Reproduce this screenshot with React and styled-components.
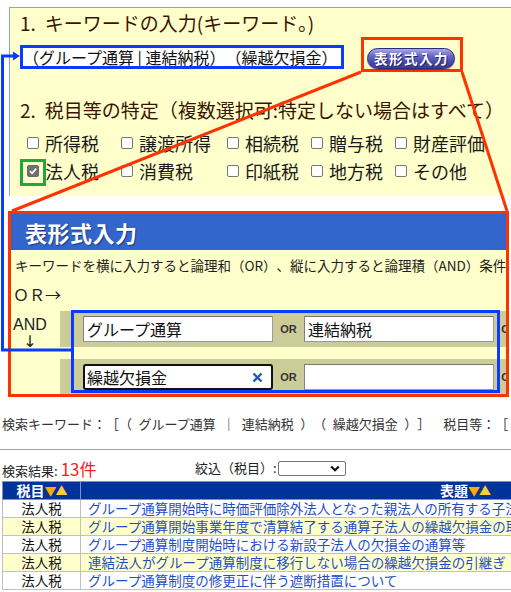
import React from 'react';
import styled, { createGlobalStyle } from 'styled-components';

const GlobalStyle = createGlobalStyle`
  html, body { margin: 0; padding: 0; background: #fff; }
  body {
    font-family: "Noto Sans CJK JP", "Noto Sans", sans-serif;
    color: #222;
    overflow: hidden;
    text-spacing-trim: space-all;
  }
`;

const Page = styled.div`
  position: relative;
  width: 511px;
  height: 592px;
  overflow: hidden;
`;

/* ---------- top panel ---------- */
const TopPanel = styled.section`
  box-sizing: border-box;
  margin: 7px 0 0 9px;
  width: 502px;
  height: 189px;
  background: #ffffcc;
  border-top: 1px solid #86a3dc;
  border-left: 1px solid #86a3dc;
  padding: 3px 0 0 10px;
`;

const Heading = styled.h2`
  margin: ${p => p.$top}px 0 0;
  font-size: 19px;
  font-weight: 400;
  line-height: 24px;
  color: #3a1400;
  white-space: nowrap;
`;

const Num = styled.span`
  margin-right: 9px;
`;

const KeywordRow = styled.div`
  display: flex;
  align-items: flex-start;
  margin-top: 2px;
  height: 35px;
`;

const KeywordBox = styled.div`
  box-sizing: border-box;
  width: 324px;
  height: 24px;
  margin-top: 8px;
  border: 3px solid #0a3cff;
  background: #fff;
  font-size: 16px;
  line-height: 18px;
  color: #111;
  white-space: nowrap;
  overflow: hidden;
`;

const RedFrame = styled.div`
  box-sizing: border-box;
  margin-left: 17px;
  width: 102px;
  height: 35px;
  border: 3px solid #ff3300;
  padding: 5px 0 0 3px;
`;

const PillButton = styled.button`
  box-sizing: border-box;
  width: 88px;
  height: 21px;
  padding: 0 0 0 1px;
  border-radius: 11px;
  border: 1px solid #2b2b7a;
  background: linear-gradient(#a9a9ee 0%, #6a6ac8 35%, #4848a8 70%, #3d3d96 100%);
  color: #fff;
  font-family: "Noto Sans CJK JP", sans-serif;
  font-size: 13.5px;
  font-weight: 700;
  letter-spacing: 1.5px;
  line-height: 19px;
  white-space: nowrap;
  text-shadow: 1px 1px 0 #22226a;
  box-shadow: 0 1px 1px rgba(0,0,0,0.35);
`;

const CheckGrid = styled.div`
  display: grid;
  grid-template-columns: 94px 106px 84px 84px auto;
  grid-auto-rows: 28px;
  margin-top: 7px;
  padding-left: 7px;
`;

const CheckItem = styled.label`
  display: flex;
  align-items: center;
  gap: 6px;
  font-size: 18px;
  line-height: 28px;
  white-space: nowrap;
  color: #1a1a1a;
`;

const Box = styled.span`
  position: relative;
  flex: none;
  box-sizing: border-box;
  width: 12px;
  height: 12px;
  border-radius: 2px;
  border: 1px solid ${p => (p.$checked ? '#6a6a6a' : '#767676')};
  background: ${p => (p.$checked ? '#6f6f6f' : '#fff')};
  display: flex;
  align-items: center;
  justify-content: center;
  ${p => p.$highlight && `
    &::after {
      content: '';
      position: absolute;
      left: -8px;
      top: -7px;
      width: 26px;
      height: 27px;
      box-sizing: border-box;
      border: 3px solid #1fa83c;
    }
  `}
`;

/* ---------- table-input frame ---------- */
const TableInputFrame = styled.section`
  position: relative;
  box-sizing: border-box;
  margin: 15px 0 0 8px;
  width: 501px;
  height: 186px;
  border: 3px solid #ff3300;
  background: #ffffcc;
  overflow: hidden;
`;

const FrameHeader = styled.div`
  height: 36px;
  background: #3366cc;
  color: #fff;
  font-size: 22px;
  font-weight: 700;
  line-height: 36px;
  padding-left: 14px;
  text-shadow: 1px 1px 1px #1b3a80;
  letter-spacing: 0.5px;
`;

const Desc = styled.div`
  margin-top: 5px;
  padding-left: 4px;
  font-size: 13.5px;
  line-height: 20px;
  white-space: nowrap;
  color: #222;
`;

const OrLabel = styled.div`
  margin-top: 9px;
  padding-left: 2px;
  font-size: 16px;
  line-height: 20px;
  color: #222;
`;

const Rows = styled.div`
  margin-top: 7px;
  display: flex;
  flex-direction: column;
  gap: 12px;
`;

const Row = styled.div`
  display: flex;
  height: 36px;
`;

const AxisCell = styled.div`
  box-sizing: border-box;
  flex: none;
  width: 49px;
  padding-left: 2px;
`;

const AndLabel = styled.div`
  display: inline-flex;
  flex-direction: column;
  align-items: center;
  margin-top: -1px;
  font-family: "Liberation Sans", Arial, sans-serif;
  font-size: 16px;
  line-height: 16px;
  color: #222;
`;

const DownArrow = styled.span`
  font-family: "DejaVu Sans", sans-serif;
  font-size: 16px;
  line-height: 18px;
  color: #222;
`;

const KhakiBar = styled.div`
  flex: 1;
  display: flex;
  align-items: center;
  padding-left: 23px;
  background: #cccc99;
`;

const Field = styled.div`
  position: relative;
  box-sizing: border-box;
  flex: none;
  width: 190px;
  height: 26px;
  background: #fff;
  border: ${p => (p.$focused ? '2px solid #111' : '1px solid #9a9a9a')};
  border-top-color: ${p => (p.$focused ? '#111' : '#777')};
  border-left-color: ${p => (p.$focused ? '#111' : '#808080')};
  border-radius: ${p => (p.$focused ? '3px' : '1px')};
  padding-left: ${p => (p.$focused ? '2px' : '3px')};
  font-size: 16px;
  line-height: ${p => (p.$focused ? '22px' : '24px')};
  color: #111;
  white-space: nowrap;
`;

const Composing = styled.span`
  border-bottom: 1px dotted #111;
`;

const ClearIcon = styled.svg`
  position: absolute;
  right: 8px;
  top: 6px;
`;

const OrSep = styled.span`
  flex: none;
  width: 31px;
  text-align: center;
  font-family: "Liberation Sans", Arial, sans-serif;
  font-size: 11px;
  font-weight: 700;
  color: #333;
`;

const BlueFrame = styled.div`
  position: absolute;
  left: 60px;
  top: 96px;
  width: 429px;
  height: 83px;
  box-sizing: border-box;
  border: 3px solid #0a3cff;
  pointer-events: none;
`;

/* ---------- result area ---------- */
const SearchKeyword = styled.div`
  margin-top: 17px;
  padding-left: 2px;
  font-size: 13px;
  line-height: 20px;
  color: #333;
  white-space: nowrap;
`;

const Rule = styled.div`
  margin-top: 15px;
  height: 1px;
  background: #a0a0a0;
`;

const ResultBar = styled.div`
  display: flex;
  align-items: flex-end;
  height: 31px;
  padding-left: 2px;
`;

const ResultCount = styled.div`
  flex: none;
  width: 193px;
  font-size: 13px;
  line-height: 20px;
  color: #222;
  white-space: nowrap;
`;

const Count = styled.span`
  margin-left: 3px;
  font-size: 17px;
  color: #ff1a1a;
`;

const Filter = styled.div`
  display: flex;
  align-items: center;
  gap: 1px;
  margin-bottom: 4px;
  font-size: 13px;
  line-height: 18px;
  color: #222;
  white-space: nowrap;
`;

const SelectBox = styled.span`
  box-sizing: border-box;
  width: 68px;
  height: 15px;
  border: 1px solid #767676;
  border-radius: 2px;
  background: #fff;
  display: flex;
  align-items: center;
  justify-content: flex-end;
  padding-right: 5px;
`;

const ResultTable = styled.table`
  margin-left: 2px;
  width: 848px;
  border-collapse: collapse;
  table-layout: fixed;
`;

const Th = styled.th`
  height: 17px;
  padding: 0;
  background: #003399;
  color: #fff;
  font-size: 14px;
  font-weight: 700;
  line-height: 17px;
  border: 1px solid #8090c0;
  white-space: nowrap;
`;

const Sort = styled.span`
  font-size: 12px;
  letter-spacing: -1px;
  color: ${p => p.$c};
`;

const Tr = styled.tr`
  background: ${p => (p.$alt ? '#ffffcc' : '#fff')};
`;

const TaxCell = styled.td`
  height: 17px;
  padding: 0;
  text-align: center;
  border: 1px solid #c0c0c0;
  font-size: 13.5px;
  line-height: 17px;
  color: #111;
`;

const TitleCell = styled.td`
  height: 17px;
  padding: 0 0 0 7px;
  border: 1px solid #c0c0c0;
  font-size: 13.5px;
  line-height: 17px;
  white-space: nowrap;
  overflow: hidden;
`;

const TitleLink = styled.a`
  color: #1f4fc6;
  text-decoration: none;
`;

const Overlay = styled.svg`
  position: absolute;
  left: 0;
  top: 0;
  pointer-events: none;
`;

const row1 = ['所得税', '譲渡所得', '相続税', '贈与税', '財産評価'];
const row2 = ['法人税', '消費税', '印紙税', '地方税', 'その他'];

const results = [
  'グループ通算開始時に時価評価除外法人となった親法人の所有する子法人株式の評価損益',
  'グループ通算開始事業年度で清算結了する通算子法人の繰越欠損金の取扱い',
  'グループ通算制度開始時における新設子法人の欠損金の通算等',
  '連結法人がグループ通算制度に移行しない場合の繰越欠損金の引継ぎ',
  'グループ通算制度の修更正に伴う遮断措置について',
];

const EN = '\u2002';
const keywordEcho =
  `検索キーワード：［（${EN}グループ通算${EN}｜${EN}連結納税${EN}）（${EN}繰越欠損金${EN}）］　税目等：［${EN}法人税${EN}］`;

function Check({ label, checked, highlight }) {
  return (
    <CheckItem>
      <Box $checked={checked} $highlight={highlight}>
        {checked && (
          <svg width="10" height="10" viewBox="0 0 10 10">
            <path d="M2 5.2 L4.1 7.3 L8.2 2.6" fill="none" stroke="#fff" strokeWidth="1.8" />
          </svg>
        )}
      </Box>
      {label}
    </CheckItem>
  );
}

export default function App() {
  return (
    <Page>
      <GlobalStyle />
      <TopPanel>
        <Heading $top={0}>
          <Num>1.</Num>キーワードの入力(キーワード｡)
        </Heading>
        <KeywordRow>
          <KeywordBox>（グループ通算 | 連結納税）（繰越欠損金）</KeywordBox>
          <RedFrame>
            <PillButton>表形式入力</PillButton>
          </RedFrame>
        </KeywordRow>
        <Heading $top={26}>
          <Num>2.</Num>税目等の特定（複数選択可:特定しない場合はすべて）
        </Heading>
        <CheckGrid>
          {row1.map(l => (
            <Check key={l} label={l} />
          ))}
          {row2.map(l => (
            <Check key={l} label={l} checked={l === '法人税'} highlight={l === '法人税'} />
          ))}
        </CheckGrid>
      </TopPanel>

      <TableInputFrame>
        <FrameHeader>表形式入力</FrameHeader>
        <Desc>キーワードを横に入力すると論理和（OR）、縦に入力すると論理積（AND）条件で検索します。</Desc>
        <OrLabel>ＯＲ→</OrLabel>
        <Rows>
          <Row>
            <AxisCell>
              <AndLabel>
                <span>AND</span>
                <DownArrow>↓</DownArrow>
              </AndLabel>
            </AxisCell>
            <KhakiBar>
              <Field>グループ通算</Field>
              <OrSep>OR</OrSep>
              <Field>連結納税</Field>
              <OrSep>OR</OrSep>
            </KhakiBar>
          </Row>
          <Row>
            <AxisCell />
            <KhakiBar>
              <Field $focused>
                <Composing>繰</Composing>越欠損金
                <ClearIcon width="11" height="11" viewBox="0 0 11 11">
                  <path d="M1.5 1.5 L9.5 9.5 M9.5 1.5 L1.5 9.5" stroke="#1d5cb8" strokeWidth="2.4" />
                </ClearIcon>
              </Field>
              <OrSep>OR</OrSep>
              <Field />
              <OrSep>OR</OrSep>
            </KhakiBar>
          </Row>
        </Rows>
        <BlueFrame />
      </TableInputFrame>

      <SearchKeyword>{keywordEcho}</SearchKeyword>
      <Rule />
      <ResultBar>
        <ResultCount>
          検索結果:<Count>13件</Count>
        </ResultCount>
        <Filter>
          絞込（税目）:
          <SelectBox>
            <svg width="10" height="7" viewBox="0 0 10 7">
              <path d="M1.2 1.5 L5 5.3 L8.8 1.5" fill="none" stroke="#111" strokeWidth="2" />
            </svg>
          </SelectBox>
        </Filter>
      </ResultBar>
      <ResultTable>
        <colgroup>
          <col style={{ width: 78 }} />
          <col />
        </colgroup>
        <thead>
          <tr>
            <Th>
              税目<Sort $c="#ffaa00">▼</Sort>
              <Sort $c="#ffcc33">▲</Sort>
            </Th>
            <Th>
              表題<Sort $c="#ffaa00">▼</Sort>
              <Sort $c="#ffcc33">▲</Sort>
            </Th>
          </tr>
        </thead>
        <tbody>
          {results.map((t, i) => (
            <Tr key={t} $alt={i % 2 === 1}>
              <TaxCell>法人税</TaxCell>
              <TitleCell>
                <TitleLink href="#">{t}</TitleLink>
              </TitleCell>
            </Tr>
          ))}
        </tbody>
      </ResultTable>

      <Overlay width="511" height="592" viewBox="0 0 511 592">
        <line x1="361" y1="72" x2="12" y2="211" stroke="#ff3300" strokeWidth="3" />
        <line x1="462" y1="72" x2="507" y2="211" stroke="#ff3300" strokeWidth="3" />
        <polyline points="15,56 2.5,56 2.5,350 72,350" fill="none" stroke="#0a3cff" strokeWidth="3" />
        <polygon points="13,51.5 20,56 13,60.5" fill="#0a3cff" />
      </Overlay>
    </Page>
  );
}
